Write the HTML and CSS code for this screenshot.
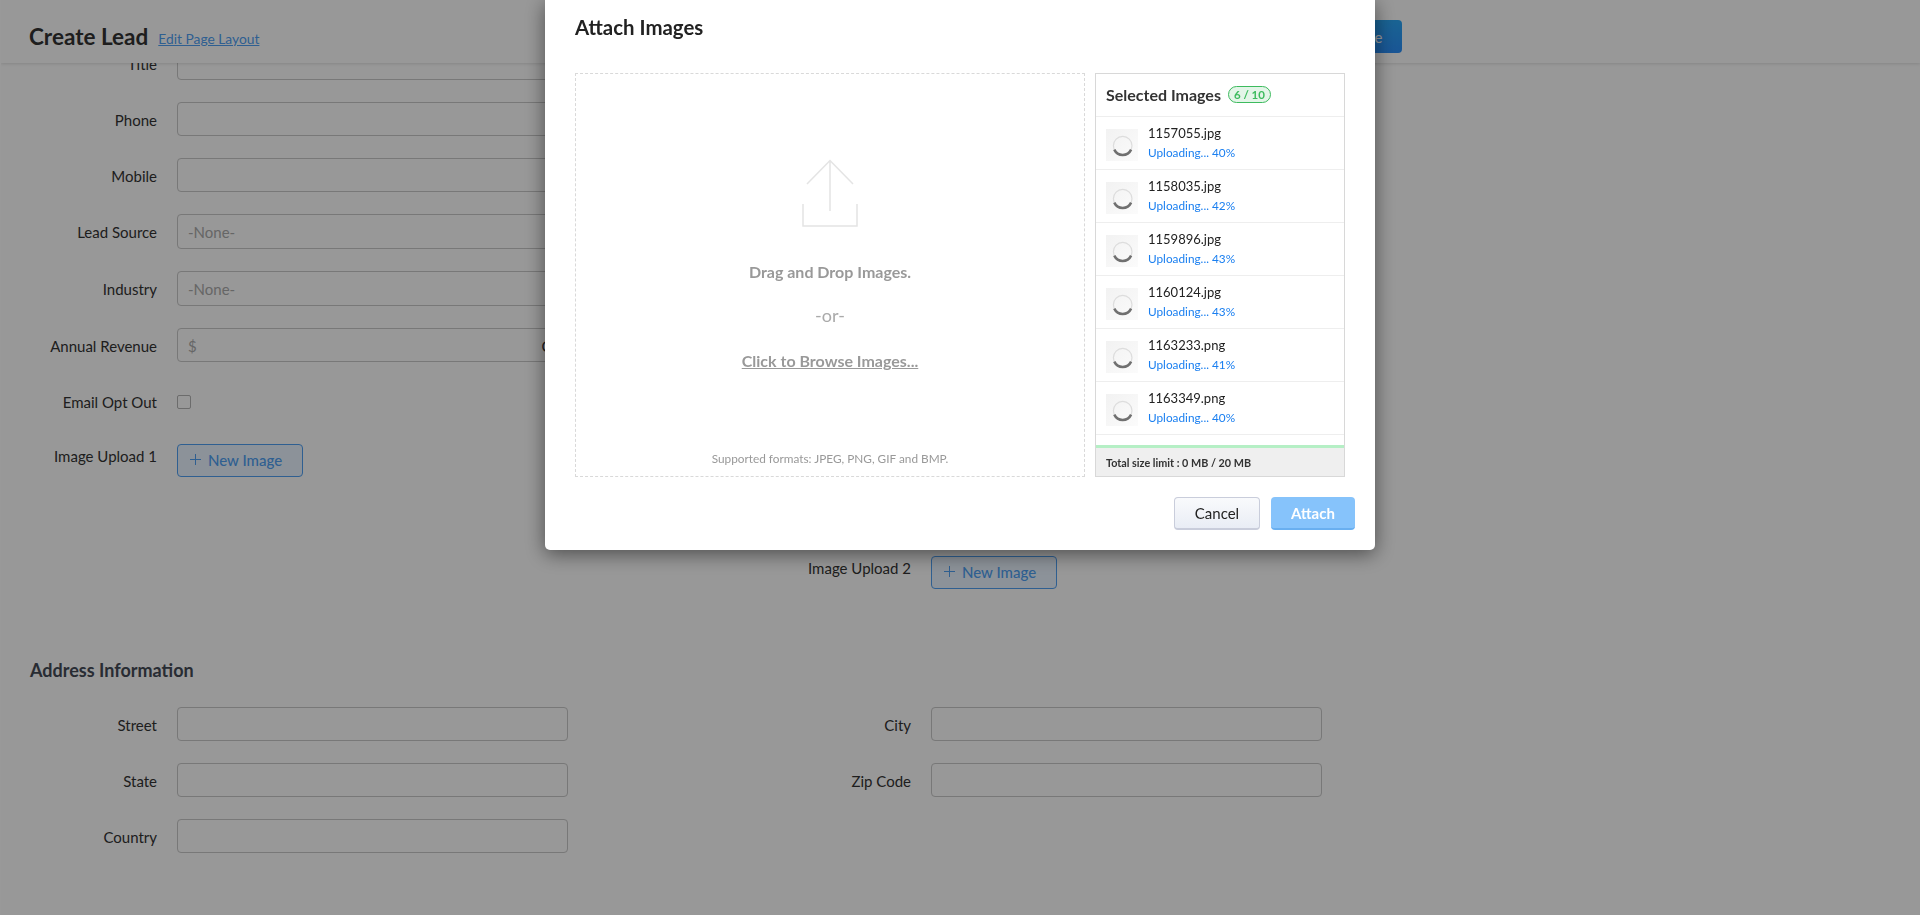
FILE: index.html
```html
<!DOCTYPE html>
<html lang="en">
<head>
    <meta charset="UTF-8">
    <meta name="viewport" content="width=device-width, initial-scale=1.0">
    <title>Create Lead</title>
    <link rel="stylesheet" href="styles.css">
</head>
<body>
    <header class="page-header">
        <h1>Create Lead</h1>
        <a class="layout-link" href="#">Edit Page Layout</a>
        <button class="save-btn">Save</button>
    </header>

    <main class="form-page">
        <div class="form-grid">
            <div class="form-col">
                <div class="row"><label>Title</label><div class="field"></div></div>
                <div class="row"><label>Phone</label><div class="field"></div></div>
                <div class="row"><label>Mobile</label><div class="field"></div></div>
                <div class="row"><label>Lead Source</label><div class="field select">-None-</div></div>
                <div class="row"><label>Industry</label><div class="field select">-None-</div></div>
                <div class="row"><label>Annual Revenue</label><div class="field money"><span>$</span><span class="money-unit">Cr</span></div></div>
                <div class="row"><label>Email Opt Out</label><span class="checkbox"></span></div>
                <div class="row row-upload"><label>Image Upload 1</label>
                    <button class="new-image">
                        <svg width="13" height="13" viewBox="0 0 13 13"><path d="M6.5 1v11M1 6.5h11"/></svg>
                        New Image
                    </button>
                </div>
            </div>
            <!-- the other fields of this column are behind the modal -->
            <div class="form-col form-col-right">
                <div class="row row-upload"><label>Image Upload 2</label>
                    <button class="new-image">
                        <svg width="13" height="13" viewBox="0 0 13 13"><path d="M6.5 1v11M1 6.5h11"/></svg>
                        New Image
                    </button>
                </div>
            </div>
        </div>

        <h2>Address Information</h2>
        <div class="form-grid">
            <div class="form-col">
                <div class="row"><label>Street</label><div class="field"></div></div>
                <div class="row"><label>State</label><div class="field"></div></div>
                <div class="row"><label>Country</label><div class="field"></div></div>
            </div>
            <div class="form-col">
                <div class="row"><label>City</label><div class="field"></div></div>
                <div class="row"><label>Zip Code</label><div class="field"></div></div>
            </div>
        </div>
    </main>

    <div class="overlay">
        <div class="modal">
            <h3>Attach Images</h3>
            <div class="modal-body">
                <div class="dropzone">
                    <svg class="upload-icon" width="60" height="70" viewBox="0 0 60 70">
                        <path d="M7 26 30 2.500 53 26M30 3v50M3 46v22h54V46"/>
                    </svg>
                    <div class="drop-title">Drag and Drop Images.</div>
                    <div class="drop-or">-or-</div>
                    <a class="drop-browse" href="#">Click to Browse Images...</a>
                    <div class="drop-note">Supported formats: JPEG, PNG, GIF and BMP.</div>
                </div>
                <div class="selected">
                    <div class="selected-head">
                        Selected Images <span class="count">6 / 10</span>
                    </div>
                    <div class="selected-list">
                        <div class="file">
                            <div class="thumb"><svg width="32" height="32" viewBox="0 0 32 32"><circle cx="16.700" cy="16.700" r="9.300"/><path d="M8.300 20.600A9.300 9.300 0 0 0 25.100 20.600"/></svg></div>
                            <div><div class="file-name">1157055.jpg</div><div class="file-status">Uploading... 40%</div></div>
                        </div>
                        <div class="file">
                            <div class="thumb"><svg width="32" height="32" viewBox="0 0 32 32"><circle cx="16.700" cy="16.700" r="9.300"/><path d="M8.300 20.600A9.300 9.300 0 0 0 25.100 20.600"/></svg></div>
                            <div><div class="file-name">1158035.jpg</div><div class="file-status">Uploading... 42%</div></div>
                        </div>
                        <div class="file">
                            <div class="thumb"><svg width="32" height="32" viewBox="0 0 32 32"><circle cx="16.700" cy="16.700" r="9.300"/><path d="M8.300 20.600A9.300 9.300 0 0 0 25.100 20.600"/></svg></div>
                            <div><div class="file-name">1159896.jpg</div><div class="file-status">Uploading... 43%</div></div>
                        </div>
                        <div class="file">
                            <div class="thumb"><svg width="32" height="32" viewBox="0 0 32 32"><circle cx="16.700" cy="16.700" r="9.300"/><path d="M8.300 20.600A9.300 9.300 0 0 0 25.100 20.600"/></svg></div>
                            <div><div class="file-name">1160124.jpg</div><div class="file-status">Uploading... 43%</div></div>
                        </div>
                        <div class="file">
                            <div class="thumb"><svg width="32" height="32" viewBox="0 0 32 32"><circle cx="16.700" cy="16.700" r="9.300"/><path d="M8.300 20.600A9.300 9.300 0 0 0 25.100 20.600"/></svg></div>
                            <div><div class="file-name">1163233.png</div><div class="file-status">Uploading... 41%</div></div>
                        </div>
                        <div class="file">
                            <div class="thumb"><svg width="32" height="32" viewBox="0 0 32 32"><circle cx="16.700" cy="16.700" r="9.300"/><path d="M8.300 20.600A9.300 9.300 0 0 0 25.100 20.600"/></svg></div>
                            <div><div class="file-name">1163349.png</div><div class="file-status">Uploading... 40%</div></div>
                        </div>
                    </div>
                    <div class="selected-foot">Total size limit : 0 MB / 20 MB</div>
                </div>
            </div>
            <div class="modal-foot">
                <button class="btn-cancel">Cancel</button>
                <button class="btn-attach">Attach</button>
            </div>
        </div>
    </div>
</body>
</html>
```

FILE: styles.css
```css
body {
    margin: 0;
    height: 100vh;
    overflow: hidden;
    background: #fdfdfd;
    border-left: 1px solid #ffffff;
    font-family: Lato, 'Open Sans', sans-serif;
    font-size: 15px;
    color: #333333;
}
button {
    font-family: inherit;
    cursor: pointer;
}

/* page header */
.page-header {
    position: relative;
    z-index: 1;
    display: flex;
    align-items: center;
    box-sizing: border-box;
    height: 63px;
    padding: 10px 0 0 28px;
    background: #fefefe;
    box-shadow: 0 1px 3px rgba(0, 0, 0, 0.12);
}
.page-header h1 {
    margin: 0;
    font-size: 22.500px;
    font-weight: 700;
    color: #333333;
}
.layout-link {
    margin: 4px 0 0 10px;
    font-size: 13.800px;
    color: #4f9ff2;
}
.save-btn {
    width: 84px;
    height: 33px;
    margin: 0 0 0 1059px;
    padding: 0 20px 0 0;
    border: none;
    border-radius: 4px;
    background: linear-gradient(#2ba6f5, #2a8ef8);
    font-size: 15px;
    text-align: right;
    color: #ffffff;
}

/* form */
.form-page {
    margin-top: -17px;
    padding-left: 29px;
}
.form-grid {
    display: grid;
    grid-template-columns: 754px 1fr;
}
.form-col-right {
    padding-top: 510px;
}
.row {
    display: flex;
    align-items: center;
    min-height: 34px;
    margin-bottom: 22px;
}
.row label {
    flex: none;
    box-sizing: border-box;
    width: 127px;
    margin-right: 20px;
    padding-top: 1px;
    text-align: right;
}
.field {
    box-sizing: border-box;
    width: 391px;
    height: 34px;
    padding: 0 10px;
    border: 1px solid #c8c8c8;
    border-radius: 4px;
    line-height: 34px;
    color: #aaaaaa;
}
.field.select {
    height: 35px;
    line-height: 35px;
}
.money {
    display: flex;
    justify-content: space-between;
}
.money-unit {
    color: #333333;
}
.checkbox {
    box-sizing: border-box;
    width: 14px;
    height: 14px;
    margin-top: 2px;
    border: 1px solid #b5b5b5;
    border-radius: 2px;
}
.row-upload {
    align-items: flex-start;
    margin-top: 26px;
}
.form-col-right .row-upload {
    margin-top: 0;
}
.row-upload label {
    padding-top: 3px;
}
.new-image {
    display: flex;
    align-items: center;
    gap: 6px;
    box-sizing: border-box;
    width: 126px;
    height: 33px;
    padding: 0 0 2px 11px;
    border: 1px solid #4f9ff2;
    border-radius: 4px;
    background: #eaf4ff;
    font-size: 15px;
    font-weight: 500;
    color: #4f9ff2;
}
.new-image svg {
    fill: none;
    stroke: #4f9ff2;
    stroke-width: 1;
}
h2 {
    margin: 46px 0 25px;
    font-size: 18px;
    line-height: 24px;
    font-weight: 700;
    color: #444a55;
}

/* modal */
.overlay {
    position: fixed;
    z-index: 2;
    top: 0;
    left: 0;
    right: 0;
    bottom: 0;
    display: flex;
    justify-content: center;
    align-items: flex-start;
    background: rgba(0, 0, 0, 0.4);
}
.modal {
    box-sizing: border-box;
    width: 830px;
    height: 550px;
    padding: 0 20px 0 30px;
    border-radius: 0 0 5px 5px;
    background: #ffffff;
    box-shadow: 0 4px 20px rgba(0, 0, 0, 0.5);
}
.modal h3 {
    height: 73px;
    margin: 0;
    padding-top: 13px;
    box-sizing: border-box;
    font-size: 20.400px;
    line-height: 28px;
    font-weight: 700;
    color: #222222;
}
.modal-body {
    display: flex;
    gap: 10px;
    height: 404px;
}
.dropzone {
    display: flex;
    flex-direction: column;
    align-items: center;
    box-sizing: border-box;
    width: 510px;
    padding: 84px 0 8px;
    border: 1px dashed #d9d9d9;
    text-align: center;
    line-height: 24px;
}
.upload-icon {
    flex: none;
    fill: none;
    stroke: #e4e4e4;
    stroke-width: 1.500;
}
.drop-title {
    margin-top: 32px;
    font-size: 16px;
    font-weight: 700;
    color: #999999;
}
.drop-or {
    margin-top: 19px;
    font-size: 18px;
    color: #aaaaaa;
}
.drop-browse {
    margin-top: 22px;
    font-size: 16px;
    font-weight: 700;
    color: #999999;
}
.drop-note {
    margin-top: auto;
    font-size: 11.800px;
    line-height: 18px;
    color: #999999;
}
.selected {
    display: flex;
    flex-direction: column;
    box-sizing: border-box;
    width: 250px;
    border: 1px solid #d8d8d8;
}
.selected-head {
    display: flex;
    align-items: center;
    gap: 7px;
    flex: none;
    box-sizing: border-box;
    height: 43px;
    padding: 0 0 2px 10px;
    border-bottom: 1px solid #eeeeee;
    font-size: 16px;
    font-weight: 700;
    color: #333333;
}
.count {
    height: 15px;
    padding: 0 5px;
    border: 1px solid #3dbb5e;
    border-radius: 9px;
    background: #e3f5e8;
    font-size: 11.500px;
    line-height: 15px;
    color: #3dbb5e;
}
.selected-list {
    flex: 1;
}
.file {
    display: flex;
    align-items: flex-start;
    gap: 10px;
    box-sizing: border-box;
    height: 53px;
    padding: 6px 0 0 10px;
    border-bottom: 1px solid #eeeeee;
}
.thumb {
    width: 32px;
    height: 32px;
    margin-top: 6px;
    background: linear-gradient(135deg, #f2f2f2, #fbfbfb);
}
.thumb svg {
    display: block;
    fill: none;
}
.thumb circle {
    stroke: #dddddd;
    stroke-width: 1.200;
}
.thumb path {
    stroke: #707070;
    stroke-width: 2.500;
}
.file-name {
    font-size: 13px;
    line-height: 20px;
    color: #222222;
}
.file-status {
    font-size: 11.800px;
    line-height: 19px;
    color: #1a7ff0;
}
.selected-foot {
    flex: none;
    height: 31px;
    padding-left: 10px;
    border-top: 3px solid #b5efc5;
    background: #efefef;
    box-sizing: border-box;
    font-size: 10.800px;
    font-weight: 700;
    line-height: 30px;
    color: #333333;
}
.modal-foot {
    display: flex;
    justify-content: flex-end;
    gap: 11px;
    padding-top: 20px;
}
.btn-cancel, .btn-attach {
    height: 33px;
    border-radius: 4px;
    font-size: 15px;
}
.btn-cancel {
    width: 86px;
    border: 1px solid #c9cddb;
    border-bottom-width: 2px;
    background: linear-gradient(#f9fafc, #e9edf5);
    color: #222222;
}
.btn-attach {
    width: 84px;
    border: none;
    border-bottom: 2px solid #69aff0;
    background: #86c3fb;
    font-weight: 700;
    color: #ffffff;
}
```
